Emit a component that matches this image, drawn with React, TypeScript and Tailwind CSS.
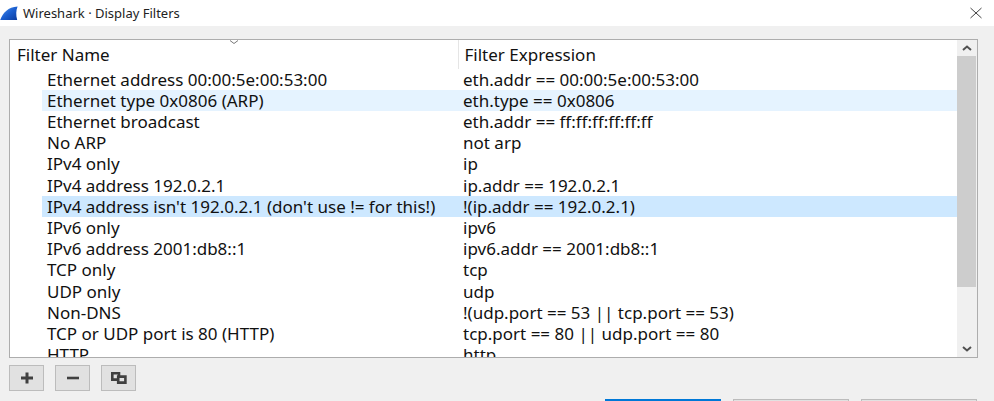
const filters = [
  { name: "Ethernet address 00:00:5e:00:53:00", expr: "eth.addr == 00:00:5e:00:53:00" },
  { name: "Ethernet type 0x0806 (ARP)", expr: "eth.type == 0x0806", hovered: true },
  { name: "Ethernet broadcast", expr: "eth.addr == ff:ff:ff:ff:ff:ff" },
  { name: "No ARP", expr: "not arp" },
  { name: "IPv4 only", expr: "ip" },
  { name: "IPv4 address 192.0.2.1", expr: "ip.addr == 192.0.2.1" },
  {
    name: "IPv4 address isn't 192.0.2.1 (don't use != for this!)",
    expr: "!(ip.addr == 192.0.2.1)",
    selected: true,
  },
  { name: "IPv6 only", expr: "ipv6" },
  { name: "IPv6 address 2001:db8::1", expr: "ipv6.addr == 2001:db8::1" },
  { name: "TCP only", expr: "tcp" },
  { name: "UDP only", expr: "udp" },
  { name: "Non-DNS", expr: "!(udp.port == 53 || tcp.port == 53)" },
  { name: "TCP or UDP port is 80 (HTTP)", expr: "tcp.port == 80 || udp.port == 80" },
  { name: "HTTP", expr: "http" },
];

const TitleBar = () => {
  return (
    <header className="flex h-[26px] shrink-0 items-center bg-white pr-3">
      <svg className="h-[15px] w-[18px]" viewBox="0 0 18 15" aria-hidden="true">
        <defs>
          <linearGradient id="fin" x1="0" y1="0" x2="1" y2="1">
            <stop offset="0" stopColor="#5a9cf0" />
            <stop offset="0.5" stopColor="#1b5fd0" />
            <stop offset="1" stopColor="#0a3a9c" />
          </linearGradient>
        </defs>
        <path
          d="M0.2 14C3.2 6.2 8 1.2 17.6 0.4C16 4 15.8 9 17.2 14Z"
          fill="url(#fin)"
        />
      </svg>
      <h1 className="flex-1 pl-[5px] text-[13px] leading-4 text-[#222]">
        Wireshark · Display Filters
      </h1>
      <button type="button" aria-label="Close">
        <svg className="h-3 w-3" viewBox="0 0 12 12" stroke="#444" fill="none">
          <path d="M0.5 1L11.5 11M11.5 1L0.5 11" />
        </svg>
      </button>
    </header>
  );
};

const FilterTable = () => {
  return (
    <table className="h-[326px] w-full table-fixed border-collapse text-left text-[17px] leading-5 text-[#111]">
      <colgroup>
        <col className="w-8" />
        <col className="w-[416px]" />
        <col />
      </colgroup>
      <thead>
        <tr className="h-[29px]">
          <th colSpan={2} className="relative p-0 pl-[7px] font-normal">
            Filter Name
            <svg
              className="absolute top-0 left-1/2 h-1 w-[9px] -translate-x-1/2"
              viewBox="0 0 9 4"
              stroke="#777"
              fill="none"
            >
              <path d="M0.5 0.5L4.5 3.5L8.5 0.5" />
            </svg>
          </th>
          <th className="border-l border-[#e5e5e5] p-0 pl-[6px] font-normal">Filter Expression</th>
        </tr>
      </thead>
      <tbody>
        {filters.map((f) => {
          const bg = f.selected ? "bg-[#cde8ff]" : f.hovered ? "bg-[#e5f3ff]" : "";
          return (
            <tr key={f.name} aria-selected={!!f.selected}>
              <td className="p-0" />
              <td className={`p-0 pl-[5px] whitespace-nowrap ${bg}`}>{f.name}</td>
              <td className={`p-0 pl-[5px] whitespace-nowrap ${bg}`}>{f.expr}</td>
            </tr>
          );
        })}
      </tbody>
    </table>
  );
};

const ScrollBar = () => {
  return (
    <div className="flex w-5 shrink-0 flex-col bg-[#f0f0f0]">
      <button type="button" aria-label="Scroll up" className="flex h-4 items-center justify-center">
        <svg className="h-[6px] w-[10px]" viewBox="0 0 10 6" stroke="#505050" strokeWidth="2" fill="none">
          <path d="M1 5L5 1.5L9 5" />
        </svg>
      </button>
      <div className="flex-1">
        <div className="mr-px h-[81%] bg-[#cdcdcd]" />
      </div>
      <button type="button" aria-label="Scroll down" className="flex h-4 items-center justify-center">
        <svg className="h-[6px] w-[10px]" viewBox="0 0 10 6" stroke="#505050" strokeWidth="2" fill="none">
          <path d="M1 1L5 4.5L9 1" />
        </svg>
      </button>
    </div>
  );
};

const toolButton =
  "flex h-[26px] w-[35px] items-center justify-center border border-[#bcbcbc] bg-[#e1e1e1]";

export default function App() {
  return (
    <div className="flex h-screen flex-col overflow-hidden bg-[#f0f0f0] font-['Noto_Sans','Open_Sans',sans-serif]">
      <TitleBar />
      <main className="flex min-h-0 flex-1 flex-col pt-[13px] pr-4 pl-[9px]">
        <div className="flex min-h-0 flex-1 border border-[#adadad] bg-white">
          <div className="min-w-0 flex-1 overflow-hidden">
            <FilterTable />
          </div>
          <ScrollBar />
        </div>
        <div className="flex shrink-0 gap-[11px] pt-[7px] pb-2">
          <button type="button" aria-label="Add filter" className={toolButton}>
            <svg className="h-3 w-3" viewBox="0 0 12 12" fill="#404040">
              <path d="M4.5 0.5H7.5V4.5H12V7.5H7.5V11.5H4.5V7.5H0V4.5H4.5Z" />
            </svg>
          </button>
          <button type="button" aria-label="Remove filter" className={toolButton}>
            <svg className="h-3 w-3" viewBox="0 0 12 12" fill="#404040">
              <path d="M0 4.7H12V7.3H0Z" />
            </svg>
          </button>
          <button type="button" aria-label="Copy filter" className={toolButton}>
            <svg className="h-3 w-4" viewBox="0 0 16 12" stroke="#404040" strokeWidth="2.6" fill="none">
              <path d="M7 7.6H1.3V1.3H8V4.5M7.2 4.6H14.4V10.6H7.2Z" />
            </svg>
          </button>
        </div>
      </main>
      <footer className="flex h-[2px] shrink-0 justify-end gap-3 pr-[17px]">
        <button
          type="button"
          aria-label="OK"
          className="h-7 w-[116px] border-2 border-[#0078d7] bg-[#e1e1e1]"
        />
        <button type="button" aria-label="Cancel" className="h-7 w-[116px] border border-[#bcbcbc] bg-[#e1e1e1]" />
        <button type="button" aria-label="Help" className="h-7 w-[116px] border border-[#bcbcbc] bg-[#e1e1e1]" />
      </footer>
    </div>
  );
}
